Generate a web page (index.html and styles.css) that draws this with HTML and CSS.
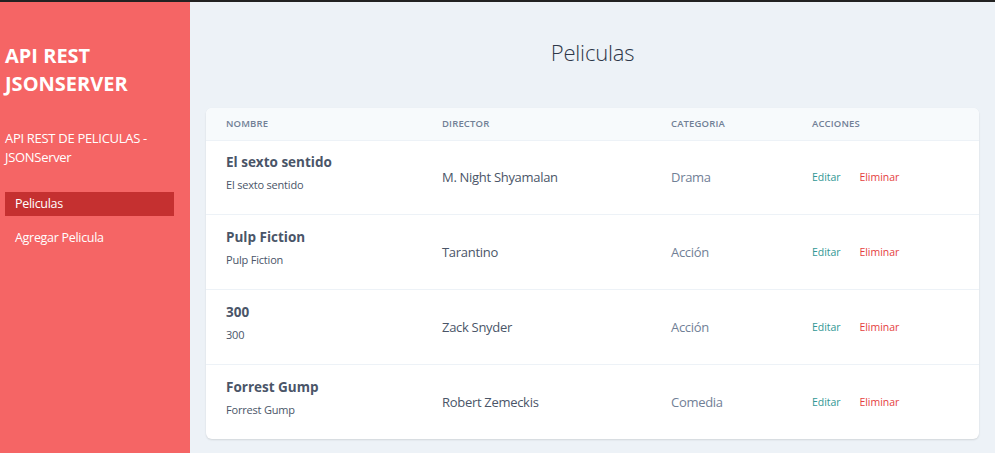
FILE: index.html
```html
<!DOCTYPE html>
<html lang="es">
<head>
<meta charset="utf-8">
<title>Peliculas</title>
<link rel="stylesheet" href="styles.css">
</head>
<body>
<div class="topbar"></div>
<div class="layout">
  <aside class="sidebar">
    <h1 class="brand">API REST<br>JSONSERVER</h1>
    <p class="subtitle">API REST DE PELICULAS - JSONServer</p>
    <nav class="nav">
      <a class="nav-item active" href="#">Peliculas</a>
      <a class="nav-item" href="#">Agregar Pelicula</a>
    </nav>
  </aside>
  <main class="main">
    <h2 class="page-title">Peliculas</h2>
    <div class="card">
      <table class="table">
        <thead>
          <tr>
            <th class="c1">Nombre</th>
            <th class="c2">Director</th>
            <th class="c3">Categoria</th>
            <th class="c4">Acciones</th>
          </tr>
        </thead>
        <tbody>
          <tr>
            <td><div class="name">El sexto sentido</div><div class="sub">El sexto sentido</div></td>
            <td class="dir">M. Night Shyamalan</td>
            <td class="cat">Drama</td>
            <td class="acts"><a class="edit" href="#">Editar</a><a class="del" href="#">Eliminar</a></td>
          </tr>
          <tr>
            <td><div class="name">Pulp Fiction</div><div class="sub">Pulp Fiction</div></td>
            <td class="dir">Tarantino</td>
            <td class="cat">Acción</td>
            <td class="acts"><a class="edit" href="#">Editar</a><a class="del" href="#">Eliminar</a></td>
          </tr>
          <tr>
            <td><div class="name">300</div><div class="sub">300</div></td>
            <td class="dir">Zack Snyder</td>
            <td class="cat">Acción</td>
            <td class="acts"><a class="edit" href="#">Editar</a><a class="del" href="#">Eliminar</a></td>
          </tr>
          <tr>
            <td><div class="name">Forrest Gump</div><div class="sub">Forrest Gump</div></td>
            <td class="dir">Robert Zemeckis</td>
            <td class="cat">Comedia</td>
            <td class="acts"><a class="edit" href="#">Editar</a><a class="del" href="#">Eliminar</a></td>
          </tr>
        </tbody>
      </table>
    </div>
  </main>
</div>
</body>
</html>
```
FILE: styles.css
```css
* { box-sizing: border-box; }
html, body { margin: 0; padding: 0; }
body {
  font-family: "Open Sans", "Noto Sans", sans-serif;
  background: #edf2f7;
  color: #4a5568;
  height: 453px;
  overflow: hidden;
}
.topbar { height: 2px; background: #222; }
.layout { display: flex; height: 451px; }
.sidebar {
  width: 190px;
  flex: none;
  background: #f56565;
  color: #fff;
  padding: 0 16px 0 5px;
}
.brand {
  margin: 40px 0 0;
  font-size: 20px;
  line-height: 28px;
  font-weight: 700;
  letter-spacing: 0;
}
.subtitle {
  margin: 31px 0 0;
  font-size: 13px;
  line-height: 19px;
  letter-spacing: -0.3px;
}
.nav { margin-top: 25px; display: flex; flex-direction: column; gap: 10px; }
.nav-item {
  color: #fff;
  text-decoration: none;
  font-size: 12.5px;
  line-height: 24px;
  padding-left: 10px;
  letter-spacing: -0.3px;
}
.nav-item.active { background: #c53030; }
.main { flex: 1; padding: 0 16px; }
.page-title {
  margin: 34px 0 0;
  text-align: center;
  font-weight: 300;
  font-size: 22px;
  line-height: 32px;
  color: #2d3748;
  letter-spacing: -0.2px;
}
.card {
  margin-top: 40px;
  background: #fff;
  border-radius: 6px;
  box-shadow: 0 1px 2px rgba(0,0,0,0.12);
  overflow: hidden;
}
.table { width: 100%; border-collapse: collapse; }
.table th {
  background: #f7fafc;
  text-align: left;
  font-size: 9.5px;
  font-weight: 600;
  color: #718096;
  text-transform: uppercase;
  height: 32px;
  padding: 0 0 0 20px;
  border-bottom: 1px solid #edf2f7;
  letter-spacing: 0.15px;
}
.c1 { width: 216px; }
.c2 { width: 229px; }
.c3 { width: 141px; }
.table td {
  height: 74.75px;
  padding: 0 0 0 20px;
  border-bottom: 1px solid #edf2f7;
  vertical-align: middle;
}
.table tbody tr:last-child td { border-bottom: none; }
.name { font-size: 13.5px; font-weight: 700; color: #4a5568; line-height: 18px; margin-top: -8px; }
.sub { font-size: 11px; color: #4a5568; margin-top: 6px; line-height: 16px; letter-spacing: -0.2px; }
.dir, .cat { font-size: 13px; letter-spacing: -0.3px; }
.dir { color: #4a5568; }
.cat { color: #718096; }
.table td.acts { font-size: 10.5px; line-height: 16px; }
.acts a { text-decoration: none; letter-spacing: -0.05px; }
.edit { color: #319795; margin-right: 19px; }
.del { color: #e53e3e; }
```
